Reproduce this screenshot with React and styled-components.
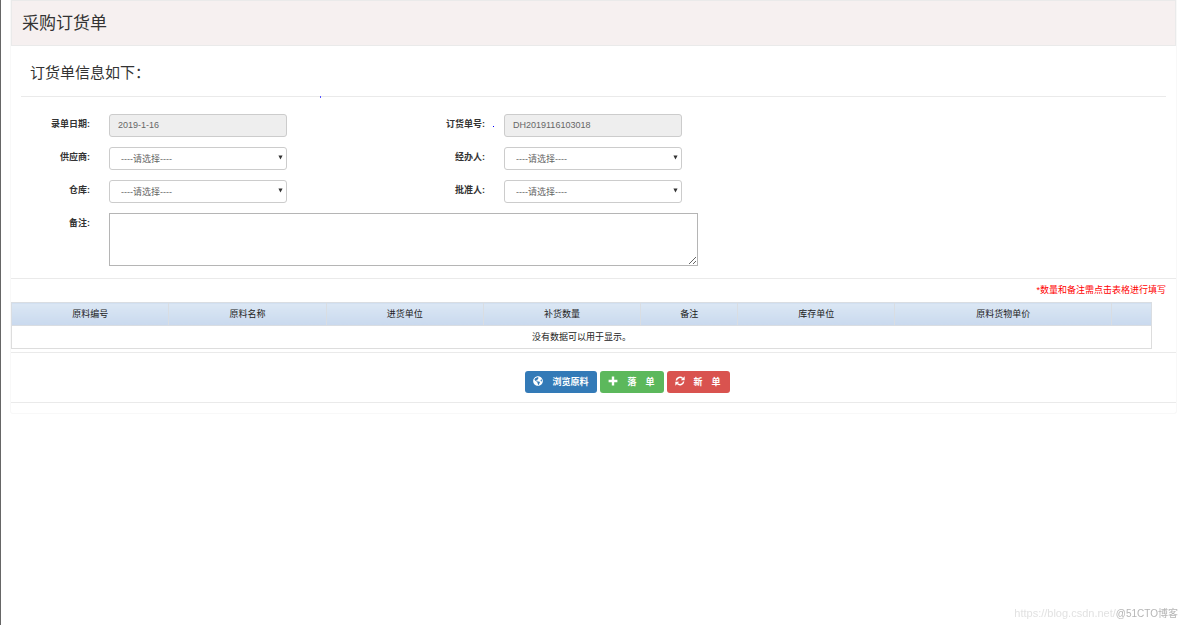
import React from "react";
import styled, { createGlobalStyle } from "styled-components";
import { FaGlobeAmericas } from "react-icons/fa";

const COLORS = {
  text: "#333",
  muted: "#666",
  line: "#eaeaea",
  border: "#ccc",
  header: "#f6f0f0",
  disabled: "#eee",
  blue: "#337ab7",
  green: "#5cb85c",
  red: "#d9534f",
};

const TABLE_COLUMNS = [
  { title: "原料编号", width: "13.8%" },
  { title: "原料名称", width: "13.8%" },
  { title: "进货单位", width: "13.8%" },
  { title: "补货数量", width: "13.8%" },
  { title: "备注", width: "8.5%" },
  { title: "库存单位", width: "13.8%" },
  { title: "原料货物单价", width: "19%" },
  { title: "", width: "3.5%" },
];

const PlusIcon = () => (
  <svg viewBox="0 0 10 10" width="10" height="10" aria-hidden="true">
    <path
      d="M3.8 0.6H6.2V3.8H9.4V6.2H6.2V9.4H3.8V6.2H0.6V3.8H3.8Z"
      fill="currentColor"
    />
  </svg>
);

const RefreshIcon = () => (
  <svg viewBox="0 0 12 12" width="10" height="10" aria-hidden="true">
    <g fill="none" stroke="currentColor" strokeWidth="1.8">
      <path d="M1.6 5.4A4.4 4.4 0 0 1 9.2 3" />
      <path d="M10.4 6.6A4.4 4.4 0 0 1 2.8 9" />
    </g>
    <path d="M11.6 0.4V5H7Z M0.4 11.6V7H5Z" fill="currentColor" />
  </svg>
);

const SelectField = ({ id, label }) => (
  <Field>
    <Label htmlFor={id}>{label}</Label>
    <SelectWrapper>
      <Select id={id} defaultValue="">
        <option value="">----请选择----</option>
      </Select>
      <Caret viewBox="0 0 6 6" aria-hidden="true">
        <path d="M0.5 0.5H5.5L3 5.5Z" fill="currentColor" />
      </Caret>
    </SelectWrapper>
  </Field>
);

const App = () => {
  return (
    <Page>
      <GlobalStyle />
      <Panel>
        <PanelHeader>
          <Title>采购订货单</Title>
        </PanelHeader>

        <FormSection>
          <Legend>订货单信息如下：</Legend>
          <Fields>
            <Field>
              <Label htmlFor="date">录单日期:</Label>
              <Input id="date" defaultValue="2019-1-16" readOnly />
            </Field>
            <Field>
              <Label htmlFor="orderNo" $marked>
                订货单号:
              </Label>
              <Input id="orderNo" defaultValue="DH2019116103018" readOnly />
            </Field>
            <SelectField id="supplier" label="供应商:" />
            <SelectField id="handler" label="经办人:" />
            <SelectField id="warehouse" label="仓库:" />
            <SelectField id="approver" label="批准人:" />
            <WideField>
              <Label htmlFor="remark">备注:</Label>
              <TextArea id="remark" />
            </WideField>
          </Fields>
        </FormSection>

        <TableSection>
          <Hint>*数量和备注需点击表格进行填写</Hint>
          <Table>
            <colgroup>
              {TABLE_COLUMNS.map(({ title, width }) => (
                <col key={title} width={width} />
              ))}
            </colgroup>
            <thead>
              <tr>
                {TABLE_COLUMNS.map(({ title }) => (
                  <HeadCell key={title}>{title}</HeadCell>
                ))}
              </tr>
            </thead>
            <tbody>
              <tr>
                <EmptyCell colSpan={TABLE_COLUMNS.length}>
                  没有数据可以用于显示。
                </EmptyCell>
              </tr>
            </tbody>
          </Table>
        </TableSection>

        <Actions>
          <Button type="button" $color={COLORS.blue}>
            <FaGlobeAmericas size={10} />
            浏览原料
          </Button>
          <Button type="button" $color={COLORS.green}>
            <PlusIcon />
            落　单
          </Button>
          <Button type="button" $color={COLORS.red}>
            <RefreshIcon />
            新　单
          </Button>
        </Actions>
      </Panel>

      <Watermark>
        <WatermarkUrl>https://blog.csdn.net/</WatermarkUrl>
        @51CTO博客
      </Watermark>
    </Page>
  );
};

const GlobalStyle = createGlobalStyle`
  *, *::before, *::after {
    box-sizing: border-box;
  }
  body {
    margin: 0;
    background: #fff;
    color: ${COLORS.text};
    font-family: "Liberation Sans", "Noto Sans CJK SC", sans-serif;
    font-size: 9px;
    line-height: 13px;
  }
  input, select, textarea, button {
    font: inherit;
    color: inherit;
  }
`;

const Page = styled.div`
  min-height: 100vh;
  padding: 0 7px 0 9px;
  border-left: 1px solid #666;
`;

const Panel = styled.main`
  border: 1px solid #f8f8f8;
  border-top: none;
  border-radius: 0 0 3px 3px;
  padding-bottom: 10px;
`;

const PanelHeader = styled.header`
  padding: 10px 10px 8px;
  background: ${COLORS.header};
  border: 1px solid ${COLORS.line};
`;

const Title = styled.h1`
  margin: 0;
  font-size: 17px;
  line-height: 26px;
  font-weight: 400;
`;

const FormSection = styled.form`
  padding: 0 10px 12px;
  border-bottom: 1px solid ${COLORS.line};
`;

const Legend = styled.h2`
  position: relative;
  margin: 0 0 17px;
  padding: 17px 9px 13px;
  border-bottom: 1px solid ${COLORS.line};
  font-size: 15px;
  line-height: 20px;
  font-weight: 400;

  // ink speck on the rule
  &::after {
    content: "";
    position: absolute;
    left: 299px;
    bottom: -2px;
    width: 1px;
    height: 2px;
    background: #55f;
  }
`;

const Fields = styled.div`
  display: grid;
  grid-template-columns: repeat(2, 34.5%);
  row-gap: 10px;
`;

const Field = styled.div`
  display: flex;
  align-items: flex-start;
  gap: 19px;
`;

const WideField = styled(Field)`
  grid-column: 1 / -1;
`;

const Label = styled.label`
  position: relative;
  flex: none;
  width: 69px;
  padding-top: 4px;
  text-align: right;
  font-weight: 700;

  &::after {
    content: "";
    display: ${(p) => (p.$marked ? "block" : "none")};
    position: absolute;
    right: -9px;
    bottom: 4px;
    width: 1px;
    height: 1px;
    background: #00f;
  }
`;

const Input = styled.input`
  width: 178px;
  height: 23px;
  padding: 0 8px 1px;
  border: 1px solid ${COLORS.border};
  border-radius: 3px;
  background: ${COLORS.disabled};
  color: ${COLORS.muted};
`;

const SelectWrapper = styled.div`
  position: relative;
  width: 178px;
`;

const Select = styled.select`
  display: block;
  appearance: none;
  width: 100%;
  height: 23px;
  padding: 2px 11px 0;
  border: 1px solid ${COLORS.border};
  border-radius: 3px;
  background: #fff;
  color: ${COLORS.muted};
`;

const Caret = styled.svg`
  position: absolute;
  top: 8px;
  right: 4px;
  width: 5px;
  height: 5px;
  pointer-events: none;
`;

const TextArea = styled.textarea`
  width: 589px;
  height: 53px;
  border: 1px solid #b5b5b5;
  background: #fff;
`;

const TableSection = styled.section`
  padding-bottom: 3px;
  border-bottom: 1px solid ${COLORS.line};
`;

const Hint = styled.p`
  margin: 0;
  padding: 5px 10px;
  text-align: right;
  color: #f00;
`;

const Table = styled.table`
  width: calc(100% - 24px);
  table-layout: fixed;
  border-collapse: collapse;
  color: #222;
`;

const HeadCell = styled.th`
  height: 23px;
  padding: 0;
  border: 1px solid #d9dde2;
  background: linear-gradient(#dbe7f4, #c9d9ee);
  font-weight: 400;
`;

const EmptyCell = styled.td`
  height: 23px;
  padding: 0;
  border: 1px solid #ddd;
  text-align: center;
`;

const Actions = styled.div`
  display: flex;
  justify-content: center;
  gap: 3px;
  padding: 18px 0 9px 68px;
  border-bottom: 1px solid ${COLORS.line};
`;

const Button = styled.button`
  display: flex;
  align-items: center;
  gap: 9px;
  height: 22px;
  padding: 0 9px 0 8px;
  border: none;
  border-radius: 3px;
  background: ${(p) => p.$color};
  color: #fff;
  font-weight: 700;

  svg {
    flex: none;
    margin-bottom: 2px;
  }
`;

const Watermark = styled.footer`
  position: fixed;
  right: 6px;
  bottom: 5px;
  font-size: 10px;
  color: #b5b5b5;
`;

const WatermarkUrl = styled.span`
  font-size: 11px;
  color: #e2e2e2;
`;

export default App;
